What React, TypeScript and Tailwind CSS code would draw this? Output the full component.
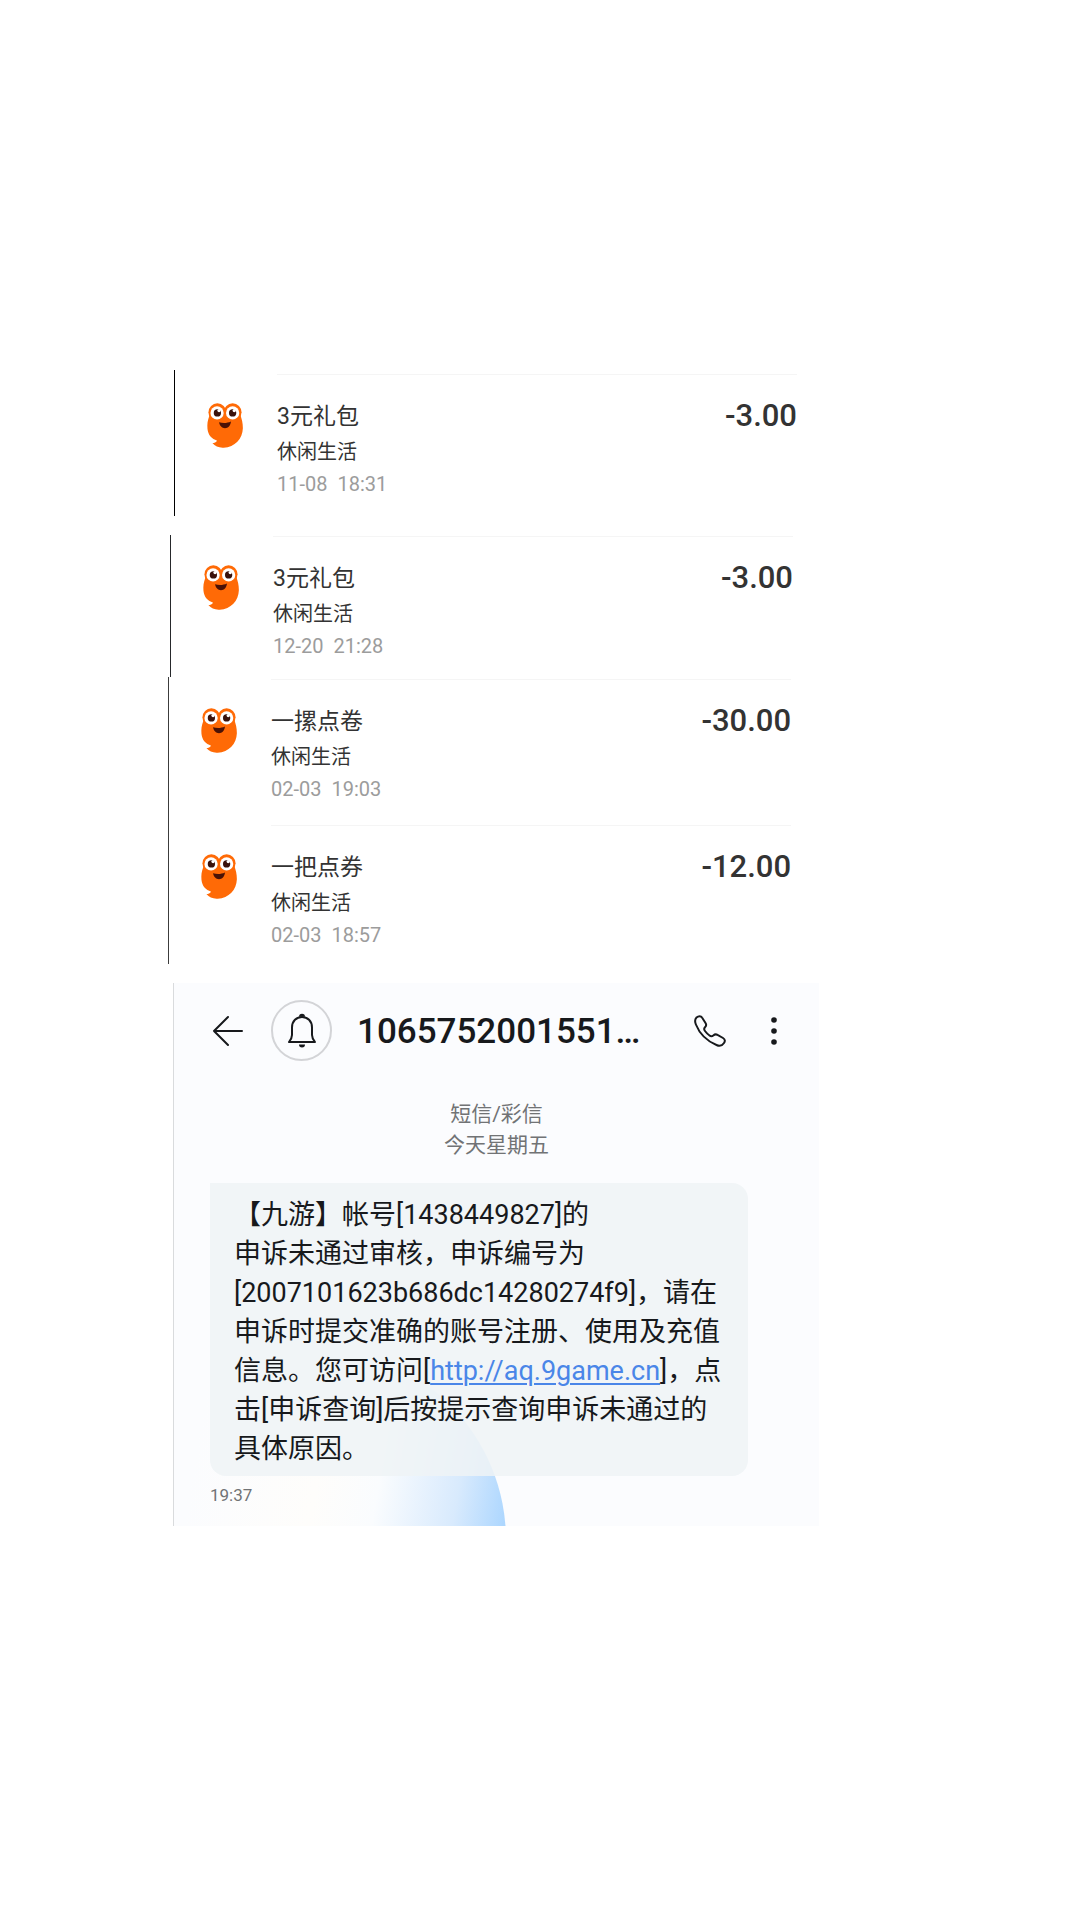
import clsx from "clsx";

type Payment = {
  id: string;
  title: string;
  category: string;
  time: string;
  amount: string;
};

type PaymentGroup = {
  id: string;
  className: string;
  payments: Payment[];
};

const groups: PaymentGroup[] = [
  {
    id: "nov",
    className: "mr-[-6px] ml-[6px] mb-[19px] border-black pt-1 pb-[17px]",
    payments: [
      {
        id: "p1",
        title: "3元礼包",
        category: "休闲生活",
        time: "11-08  18:31",
        amount: "-3.00",
      },
    ],
  },
  {
    id: "dec",
    className: "mr-[-2px] ml-[2px] border-[#26282b] pt-px pb-4",
    payments: [
      {
        id: "p2",
        title: "3元礼包",
        category: "休闲生活",
        time: "12-20  21:28",
        amount: "-3.00",
      },
    ],
  },
  {
    id: "feb",
    className: "border-[#3c3c3c] pt-[2px] pb-[14px]",
    payments: [
      {
        id: "p3",
        title: "一摞点卷",
        category: "休闲生活",
        time: "02-03  19:03",
        amount: "-30.00",
      },
      {
        id: "p4",
        title: "一把点券",
        category: "休闲生活",
        time: "02-03  18:57",
        amount: "-12.00",
      },
    ],
  },
];

function Mascot() {
  return (
    <svg
      viewBox="0 0 108 136"
      className="mt-[29px] h-[45px] w-[36px] shrink-0"
      aria-hidden="true"
    >
      <g fill="#ff6a06">
        <circle cx="31" cy="28" r="27" />
        <circle cx="77" cy="28" r="27" />
        <path d="M7 38 C1 54 0 64 1 78 C3 98 14 108 30 114 C27 119 22 121 16 121 C24 131 36 136 50 135 C84 133 107 108 108 76 C108 60 105 50 101 38 L54 14 Z" />
      </g>
      <circle cx="30" cy="30" r="20" fill="#fff" />
      <circle cx="77" cy="30" r="20" fill="#fff" />
      <circle cx="31" cy="30" r="11" fill="#3a120c" />
      <circle cx="77" cy="30" r="11" fill="#3a120c" />
      <circle cx="36" cy="23" r="5" fill="#fff" />
      <circle cx="82" cy="23" r="5" fill="#fff" />
      <path d="M36 58 C48 62 61 61 72 56 C71 69 63 76 54 76 C45 76 38 69 36 58 Z" fill="#4a1206" />
    </svg>
  );
}

function PaymentRow({ payment }: { payment: Payment }) {
  return (
    <li className="flex pl-8">
      <Mascot />
      <div className="ml-[34px] flex flex-1 items-start justify-between border-t border-[#f5f5f5] pt-6">
        <div>
          <h2 className="text-[23px] leading-[36px] text-[#333]">
            {payment.title}
          </h2>
          <p className="text-[20px] leading-[34px] text-[#333]">
            {payment.category}
          </p>
          <time className="block text-[20px] leading-[30px] whitespace-pre text-[#9c9c9c]">
            {payment.time}
          </time>
        </div>
        <span className="text-[31px] leading-[34px] font-medium text-[#333]">
          {payment.amount}
        </span>
      </div>
    </li>
  );
}

function ArrowIcon() {
  return (
    <svg viewBox="0 0 32 32" className="size-8" fill="none" stroke="#17191c" strokeWidth="2" strokeLinecap="round" strokeLinejoin="round">
      <path d="M16 2 L2 16 L16 30 M2 16 H30" />
    </svg>
  );
}

function BellIcon() {
  return (
    <svg viewBox="0 0 30 36" className="h-9 w-[30px]" fill="none" stroke="#17191c" strokeWidth="2" strokeLinejoin="round">
      <path d="M2 29 H28 C26 26.500 25 25 25 22 V14.500 C25 8 20.500 4 15 4 C9.500 4 5 8 5 14.500 V22 C5 25 4 26.500 2 29 Z" />
      <path d="M12 3.800 A3 3 0 0 1 18 3.800 Z" fill="#17191c" stroke="none" />
      <path d="M12 31.500 H18 A3 3 0 0 1 12 31.500 Z" fill="#17191c" stroke="none" />
    </svg>
  );
}

function PhoneIcon() {
  return (
    <svg viewBox="0 0 32 32" className="size-8" fill="none" stroke="#17191c" strokeWidth="2" strokeLinejoin="round">
      <path d="M2.500 2.500 C4.500 0.800 7 0.800 8 2.500 L11.500 8 C12.800 10 12.300 11 11 12.200 C9.800 13.500 9.800 14.500 11 16 C12.500 18 14 19.500 15.500 20.500 C17 21.700 18 21.500 19.300 20.400 C20.800 19.100 22 19 23.500 19.900 L29 23 C31.300 24.500 31.200 26.300 30 28 C28.300 30.600 25.500 31.400 22.500 30 C13 26 5.500 18.500 1.900 9.500 C0.700 6.500 0.800 4.200 2.500 2.500 Z" />
    </svg>
  );
}

function MoreIcon() {
  return (
    <svg viewBox="0 0 8 28" className="h-7 w-2" fill="#17191c">
      <circle cx="4" cy="3" r="2.800" />
      <circle cx="4" cy="14" r="2.800" />
      <circle cx="4" cy="25" r="2.800" />
    </svg>
  );
}

function MessageThread() {
  return (
    <section className="relative mt-[19px] mr-[-28px] ml-[5px] overflow-hidden border-l border-[#d9dbdd] bg-[#fbfcfe] pt-[17px] pb-[19px]">
      {/* wallpaper disc behind the bubble */}
      <div className="absolute bottom-[-205px] left-[-50px] size-[382px] rounded-full bg-[linear-gradient(100deg,#fbfcfe_20%,#fefdfb_48%,#fafcfe_62%,#d8eafd_80%,#9ccfff_96%)]" />

      <header className="relative flex items-center pr-[41px] pl-[38px]">
        <button type="button" aria-label="返回">
          <ArrowIcon />
        </button>
        <button
          type="button"
          aria-label="提醒"
          className="ml-[27px] flex size-[61px] shrink-0 items-center justify-center rounded-full border-2 border-[#d3d4d7]"
        >
          <BellIcon />
        </button>
        <h1 className="ml-[25px] flex-1 pt-[2px] text-[35px] leading-[42px] font-medium text-[#17191c]">
          1065752001551…
        </h1>
        <button type="button" aria-label="拨打电话">
          <PhoneIcon />
        </button>
        <button type="button" aria-label="更多" className="ml-11">
          <MoreIcon />
        </button>
      </header>

      <div className="relative mt-[38px] text-center text-[21px] leading-[31px] text-[#717375]">
        <p>短信/彩信</p>
        <p>今天星期五</p>
      </div>

      <div className="relative mt-[22px] mr-[71px] ml-9 rounded-2xl rounded-tl-none bg-[#eff3f6]/85 pt-[13px] pb-[7px] pl-6 text-[27px] leading-[39px] text-[#17191c]">
        <p>
          【九游】帐号[1438449827]的
          <br />
          申诉未通过审核，申诉编号为
          <br />
          [2007101623b686dc14280274f9]，请在
          <br />
          申诉时提交准确的账号注册、使用及充值
          <br />
          信息。您可访问[
          <a
            href="http://aq.9game.cn"
            className="text-[#4a86e8] underline decoration-2 underline-offset-3"
          >
            http://aq.9game.cn
          </a>
          ]，点
          <br />
          击[申诉查询]后按提示查询申诉未通过的
          <br />
          具体原因。
        </p>
      </div>
      <time className="relative mt-[7px] ml-9 block text-[17px] leading-6 text-[#717375]">
        19:37
      </time>
    </section>
  );
}

export default function App() {
  return (
    <main
      lang="zh-CN"
      className="min-h-screen bg-white pt-[370px] pb-20 pl-[168px] font-[Roboto,'Noto_Sans_CJK_SC',sans-serif]"
    >
      <div className="w-full max-w-[623px]">
        {groups.map((group) => (
          <ul
            key={group.id}
            className={clsx("flex flex-col gap-[21px] border-l", group.className)}
          >
            {group.payments.map((payment) => (
              <PaymentRow key={payment.id} payment={payment} />
            ))}
          </ul>
        ))}
        <MessageThread />
      </div>
    </main>
  );
}
